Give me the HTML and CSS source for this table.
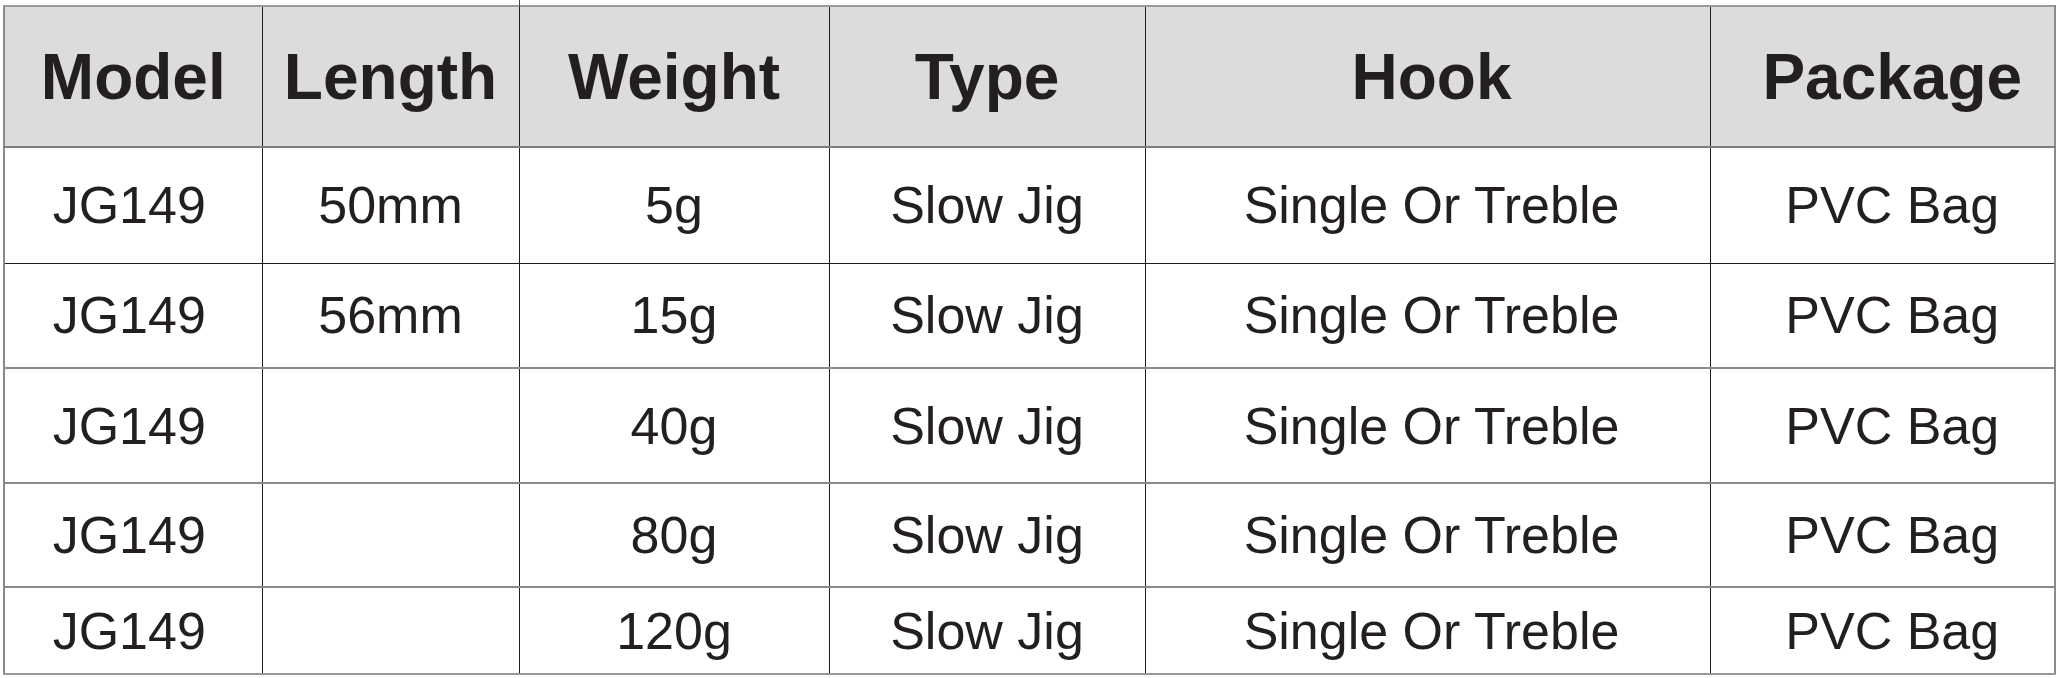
FILE: index.html
```html
<!DOCTYPE html>
<html>
<head>
<meta charset="utf-8">
<link rel="stylesheet" href="styles.css">
</head>
<body>
<div class="wrap">
<table class="spec">
  <colgroup>
    <col class="c1"><col class="c2"><col class="c3"><col class="c4"><col class="c5"><col class="c6">
  </colgroup>
  <thead>
    <tr class="head">
      <th>Model</th><th class="tick">Length</th><th>Weight</th><th>Type</th><th class="hook">Hook</th><th class="pkg">Package</th>
    </tr>
  </thead>
  <tbody>
    <tr class="r1"><td class="model">JG149</td><td>50mm</td><td>5g</td><td>Slow Jig</td><td class="hook">Single Or Treble</td><td class="pkg">PVC Bag</td></tr>
    <tr class="r2"><td class="model">JG149</td><td>56mm</td><td>15g</td><td>Slow Jig</td><td class="hook">Single Or Treble</td><td class="pkg">PVC Bag</td></tr>
    <tr class="r3 grey"><td class="model">JG149</td><td></td><td>40g</td><td>Slow Jig</td><td class="hook">Single Or Treble</td><td class="pkg">PVC Bag</td></tr>
    <tr class="r4 grey"><td class="model">JG149</td><td></td><td>80g</td><td>Slow Jig</td><td class="hook">Single Or Treble</td><td class="pkg">PVC Bag</td></tr>
    <tr class="r5 grey"><td class="model">JG149</td><td></td><td>120g</td><td>Slow Jig</td><td class="hook">Single Or Treble</td><td class="pkg">PVC Bag</td></tr>
  </tbody>
</table>
</div>
</body>
</html>
```

FILE: styles.css
```css
html, body {
  margin: 0;
  padding: 0;
  background: #ffffff;
}

.wrap {
  padding: 5px 0 0 3px;
}

.spec {
  border-collapse: collapse;
  table-layout: fixed;
  width: 2051px;
  font-family: "Liberation Sans", Arial, sans-serif;
  color: #231f20;
}

.c1 { width: 258px; }
.c2 { width: 257px; }
.c3 { width: 310px; }
.c4 { width: 316px; }
.c5 { width: 565px; }
.c6 { width: 345px; }

.spec th,
.spec td {
  padding: 0;
  text-align: center;
  vertical-align: middle;
  border: 1px solid #1e1e1e;
  white-space: nowrap;
}

.spec th {
  background: #dcdcdc;
  font-size: 64px;
  font-weight: bold;
  border-top: 2px solid #9a9a9a;
  border-bottom: 2px solid #7d7d7d;
}

.spec th:first-child,
.spec td:first-child {
  border-left: 2px solid #8a8a8a;
}

.spec th:last-child,
.spec td:last-child {
  border-right: 2px solid #8a8a8a;
}

.spec .model {
  padding-right: 8px;
}

.spec .hook {
  padding-left: 8px;
}

.spec .pkg {
  padding-left: 20px;
}

.tick {
  position: relative;
}

.tick::after {
  content: "";
  position: absolute;
  right: -1px;
  top: -7px;
  width: 1px;
  height: 7px;
  background: #444;
}

.spec td {
  font-size: 52px;
}

.head { height: 141px; }
.r1 { height: 116px; }
.r2 { height: 105px; }
.r3 { height: 115px; }
.r4 { height: 104px; }
.r5 { height: 87px; }

.grey td {
  border-top: 2px solid #8a8a8a;
}

.r5 td {
  border-bottom: 2px solid #9a9a9a;
}
```
